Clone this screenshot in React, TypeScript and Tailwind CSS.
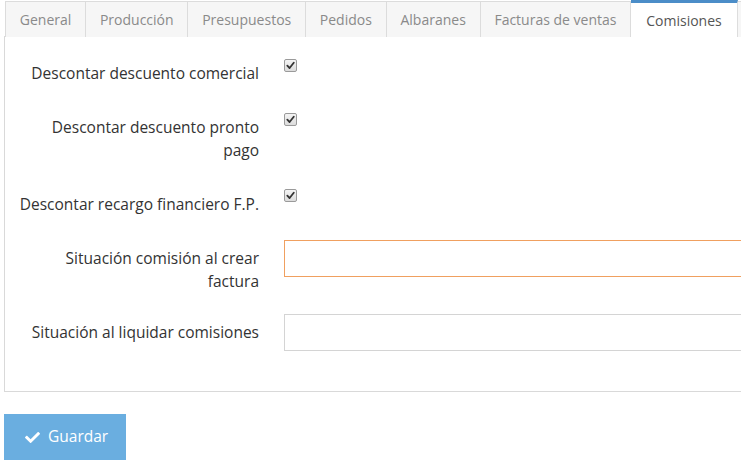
import React from 'react';
import { FaCheck } from 'react-icons/fa';

const tabs = [
  'General',
  'Producción',
  'Presupuestos',
  'Pedidos',
  'Albaranes',
  'Facturas de ventas',
  'Comisiones',
];

const Check: React.FC = () => (
  <span className="flex h-[13px] w-[13px] items-center justify-center rounded-[2px] border border-[#9a9a9a] bg-gradient-to-b from-[#f4f4f4] to-[#dcdcdc]">
    <svg width="9" height="9" viewBox="0 0 10 10">
      <path d="M1.5 5.2 L4 7.8 L8.6 2" fill="none" stroke="#333" strokeWidth="2" strokeLinecap="round" strokeLinejoin="round" />
    </svg>
  </span>
);

const App: React.FC = () => {
  return (
    <div className="w-full h-[465px] overflow-hidden bg-white text-[14px] text-[#333] font-['Open_Sans',sans-serif]">
      <div className="w-[820px] pl-1">
        <div className="flex pt-px pl-px relative z-10 -mb-px">
          {tabs.map((t) => {
            const active = t === 'Comisiones';
            return (
              <div
                key={t}
                className={
                  active
                    ? 'h-[37px] px-[15px] -mt-px border-t-[3px] border-t-[#4b8dc8] border-r border-r-[#ddd] bg-white text-[#555] flex items-center pt-px whitespace-nowrap'
                    : 'h-[36px] px-[13.8px] border-t border-r border-[#dcdcdc] first:border-l bg-[#f6f6f6] text-[#8a8a8a] flex items-center whitespace-nowrap'
                }
              >
                {t}
              </div>
            );
          })}
          <div className="h-[36px] w-[60px] border-t border-r border-[#dcdcdc] bg-[#f6f6f6]" />
        </div>
        <div className="border border-[#d9d9d9] pt-[18px] pb-[40px] text-[15.5px]">
          <div className="flex items-start">
            <label className="w-[254px] pl-[13px] text-right pt-[7px] leading-[23px]">Descontar descuento comercial</label>
            <div className="ml-[25px] mt-[4px]"><Check /></div>
          </div>
          <div className="flex items-start mt-[24px]">
            <label className="w-[254px] pl-[13px] text-right pt-[7px] leading-[23px]">Descontar descuento pronto pago</label>
            <div className="ml-[25px] mt-[4px]"><Check /></div>
          </div>
          <div className="flex items-start mt-[24px]">
            <label className="w-[254px] pl-[13px] text-right pt-[7px] leading-[23px]">Descontar recargo financiero F.P.</label>
            <div className="ml-[25px] mt-[3px]"><Check /></div>
          </div>
          <div className="flex items-start mt-[24px]">
            <label className="w-[254px] pl-[13px] text-right pt-[7px] leading-[23px]">Situación comisión al crear factura</label>
            <input className="ml-[25px] h-[37px] w-[500px] border border-[#f0a060] bg-white outline-none" />
          </div>
          <div className="flex items-start mt-[21px]">
            <label className="w-[254px] pl-[13px] text-right pt-[7px] leading-[23px]">Situación al liquidar comisiones</label>
            <input className="ml-[25px] h-[37px] w-[500px] border border-[#d4d4d4] bg-white outline-none" />
          </div>
        </div>
        <button className="mt-[22px] flex h-[46px] w-[122px] items-center gap-[8px] bg-[#6aaee0] pl-[21px] text-[15.5px] text-white">
          <FaCheck className="text-[15px]" />
          Guardar
        </button>
      </div>
    </div>
  );
};

export default App;
